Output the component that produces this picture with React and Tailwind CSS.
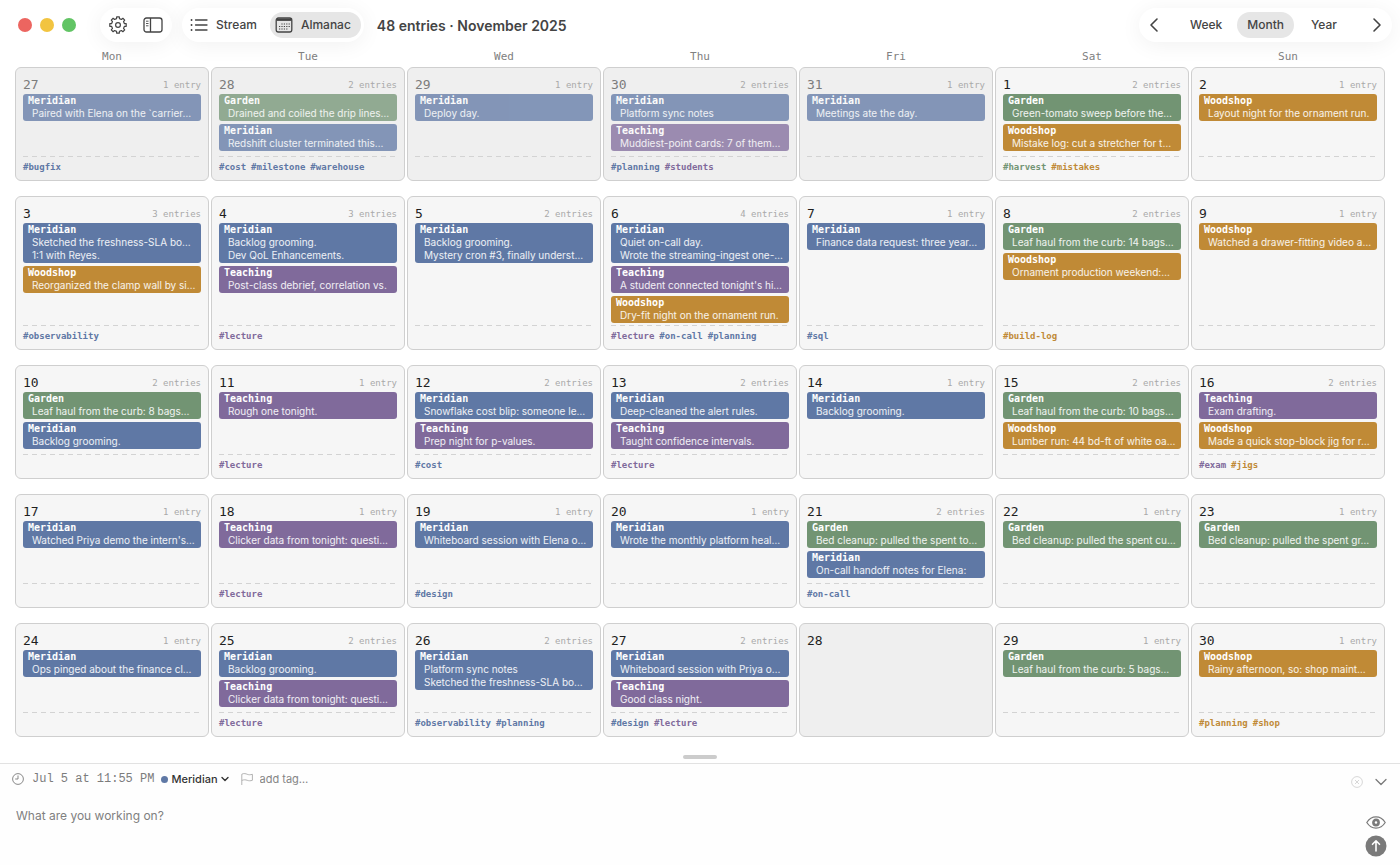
import React from 'react';

const MONO = "font-['DejaVu_Sans_Mono','Liberation_Mono',monospace]";
const LIGHT_MONO = "font-['Liberation_Mono','DejaVu_Sans_Mono',monospace]";
const TONES = {
  Meridian: { chip: 'bg-[#5f78a5]', tag: 'text-[#5f78a5]' },
  Garden: { chip: 'bg-[#729473]', tag: 'text-[#729473]' },
  Teaching: { chip: 'bg-[#806a9b]', tag: 'text-[#806a9b]' },
  Woodshop: { chip: 'bg-[#c08a36]', tag: 'text-[#c08a36]' },
};
const M = (...lines) => ['Meridian', lines];
const G = (...lines) => ['Garden', lines];
const T = (...lines) => ['Teaching', lines];
const W = (...lines) => ['Woodshop', lines];
const m = (label) => ['Meridian', label];
const g = (label) => ['Garden', label];
const t = (label) => ['Teaching', label];
const w = (label) => ['Woodshop', label];

const WEEKS = [
  [
    { d: 27, n: 1, out: true, c: [M('Paired with Elena on the `carrier…')], tags: [m('bugfix')] },
    { d: 28, n: 2, out: true, c: [G('Drained and coiled the drip lines…'), M('Redshift cluster terminated this…')], tags: [m('cost'), m('milestone'), m('warehouse')] },
    { d: 29, n: 1, out: true, c: [M('Deploy day.')], tags: [] },
    { d: 30, n: 2, out: true, c: [M('Platform sync notes'), T('Muddiest-point cards: 7 of them…')], tags: [m('planning'), t('students')] },
    { d: 31, n: 1, out: true, c: [M('Meetings ate the day.')], tags: [] },
    { d: 1, n: 2, c: [G('Green-tomato sweep before the…'), W('Mistake log: cut a stretcher for t…')], tags: [g('harvest'), w('mistakes')] },
    { d: 2, n: 1, c: [W('Layout night for the ornament run.')], tags: [] },
  ],
  [
    { d: 3, n: 3, c: [M('Sketched the freshness-SLA bo…', '1:1 with Reyes.'), W('Reorganized the clamp wall by si…')], tags: [m('observability')] },
    { d: 4, n: 3, c: [M('Backlog grooming.', 'Dev QoL Enhancements.'), T('Post-class debrief, correlation vs.')], tags: [t('lecture')] },
    { d: 5, n: 2, c: [M('Backlog grooming.', 'Mystery cron #3, finally underst…')], tags: [] },
    { d: 6, n: 4, c: [M('Quiet on-call day.', 'Wrote the streaming-ingest one-…'), T("A student connected tonight's hi…"), W('Dry-fit night on the ornament run.')], tags: [t('lecture'), m('on-call'), m('planning')] },
    { d: 7, n: 1, c: [M('Finance data request: three year…')], tags: [m('sql')] },
    { d: 8, n: 2, c: [G('Leaf haul from the curb: 14 bags…'), W('Ornament production weekend:…')], tags: [w('build-log')] },
    { d: 9, n: 1, c: [W('Watched a drawer-fitting video a…')], tags: [] },
  ],
  [
    { d: 10, n: 2, c: [G('Leaf haul from the curb: 8 bags…'), M('Backlog grooming.')], tags: [] },
    { d: 11, n: 1, c: [T('Rough one tonight.')], tags: [t('lecture')] },
    { d: 12, n: 2, c: [M('Snowflake cost blip: someone le…'), T('Prep night for p-values.')], tags: [m('cost')] },
    { d: 13, n: 2, c: [M('Deep-cleaned the alert rules.'), T('Taught confidence intervals.')], tags: [t('lecture')] },
    { d: 14, n: 1, c: [M('Backlog grooming.')], tags: [] },
    { d: 15, n: 2, c: [G('Leaf haul from the curb: 10 bags…'), W('Lumber run: 44 bd-ft of white oa…')], tags: [] },
    { d: 16, n: 2, c: [T('Exam drafting.'), W('Made a quick stop-block jig for r…')], tags: [t('exam'), w('jigs')] },
  ],
  [
    { d: 17, n: 1, c: [M("Watched Priya demo the intern's…")], tags: [] },
    { d: 18, n: 1, c: [T('Clicker data from tonight: questi…')], tags: [t('lecture')] },
    { d: 19, n: 1, c: [M('Whiteboard session with Elena o…')], tags: [m('design')] },
    { d: 20, n: 1, c: [M('Wrote the monthly platform heal…')], tags: [] },
    { d: 21, n: 2, c: [G('Bed cleanup: pulled the spent to…'), M('On-call handoff notes for Elena:')], tags: [m('on-call')] },
    { d: 22, n: 1, c: [G('Bed cleanup: pulled the spent cu…')], tags: [] },
    { d: 23, n: 1, c: [G('Bed cleanup: pulled the spent gr…')], tags: [] },
  ],
  [
    { d: 24, n: 1, c: [M('Ops pinged about the finance cl…')], tags: [] },
    { d: 25, n: 2, c: [M('Backlog grooming.'), T('Clicker data from tonight: questi…')], tags: [t('lecture')] },
    { d: 26, n: 2, c: [M('Platform sync notes', 'Sketched the freshness-SLA bo…')], tags: [m('observability'), m('planning')] },
    { d: 27, n: 2, c: [M('Whiteboard session with Priya o…'), T('Good class night.')], tags: [m('design'), t('lecture')] },
    { d: 28, n: 0, c: [], tags: [] },
    { d: 29, n: 1, c: [G('Leaf haul from the curb: 5 bags…')], tags: [] },
    { d: 30, n: 1, c: [W('Rainy afternoon, so: shop maint…')], tags: [w('planning'), w('shop')] },
  ],
];

function DayCard({ day }) {
  const empty = day.n === 0;
  return (
    <article
      className={`flex min-h-[114px] min-w-0 flex-col rounded-[6px] border border-[#cfcfcf] px-[7px] ${
        day.out || empty ? 'bg-[#efefef]' : 'bg-[#f6f6f6]'
      }`}
    >
      <header className="flex h-[26px] items-end justify-between">
        <span className={`text-[13px] leading-[18px] ${MONO} ${day.out ? 'text-[#7c7c7c]' : 'text-[#1f1f1f]'}`}>{day.d}</span>
        {!empty && (
          <span className={`text-[9px] leading-[18px] text-[#a9a9a9] ${MONO}`}>
            {day.n} {day.n === 1 ? 'entry' : 'entries'}
          </span>
        )}
      </header>
      <div className={`flex flex-col gap-[3px] pb-[2px] ${day.out ? 'opacity-75' : ''}`}>
        {day.c.map(([name, lines], i) => (
          <section key={i} className={`overflow-hidden rounded-[3px] px-[5px] pb-px text-white ${TONES[name].chip}`}>
            <h3 className={`text-[10px] leading-[13px] font-bold ${MONO}`}>{name}</h3>
            {lines.map((l) => (
              <p key={l} className="overflow-hidden pl-1 text-[10px] leading-[13px] whitespace-nowrap text-white/90">
                {l}
              </p>
            ))}
          </section>
        ))}
      </div>
      {!empty && (
        <footer className="mt-auto h-[24px]">
          <svg className="block h-px w-full" aria-hidden="true">
            <line x1="0" y1="0.5" x2="100%" y2="0.5" stroke="#d3d3d3" strokeDasharray="5 4" />
          </svg>
          <p className={`flex gap-[5px] text-[9px] leading-[21px] font-bold ${MONO}`}>
            {day.tags.map(([tone, label]) => (
              <span key={label} className={TONES[tone].tag}>#{label}</span>
            ))}
          </p>
        </footer>
      )}
    </article>
  );
}

const GEAR_POINTS = Array.from({ length: 8 }, (_, i) => i * 45)
  .flatMap((a) => [[a - 13, 6.5], [a - 9, 8.3], [a + 9, 8.3], [a + 13, 6.5]])
  .map(([a, r]) => {
    const rad = (a * Math.PI) / 180;
    return `${(9 + r * Math.cos(rad)).toFixed(2)},${(9 + r * Math.sin(rad)).toFixed(2)}`;
  })
  .join(' ');

function Gear() {
  return (
    <svg viewBox="0 0 18 18" className="size-[18px]" fill="none" stroke="currentColor" strokeWidth="1.2" strokeLinejoin="round">
      <polygon points={GEAR_POINTS} />
      <circle cx="9" cy="9" r="2.4" />
    </svg>
  );
}

export default function App() {
  return (
    <div className="flex min-h-screen flex-col bg-white font-['Inter','Liberation_Sans',sans-serif] text-[#444444]">
      <header className="flex h-[50px] items-center pr-2 pl-[18px]">
        <div className="flex gap-2">
          <span className="size-[14px] rounded-full bg-[#ec6560]" />
          <span className="size-[14px] rounded-full bg-[#f2c440]" />
          <span className="size-[14px] rounded-full bg-[#61c464]" />
        </div>
        <div className="ml-6 flex h-[34px] items-center gap-4 rounded-full bg-white px-[9px] shadow-[0_3px_22px_rgba(0,0,0,0.06)]">
          <button aria-label="Settings"><Gear /></button>
          <button aria-label="Toggle sidebar">
            <svg viewBox="0 0 20 16" className="h-4 w-5" fill="none" stroke="currentColor" strokeWidth="1.3">
              <rect x="1" y="1" width="18" height="14" rx="2.5" />
              <path d="M7.5 1v14" />
              <path d="M3 4.2h2.5M3 6.5h2.5M3 8.8h2.5" strokeWidth="0.9" />
            </svg>
          </button>
        </div>
        <nav className="ml-[10px] flex h-[34px] items-center rounded-full bg-white pr-[3px] pl-2 text-[12px] font-medium shadow-[0_3px_22px_rgba(0,0,0,0.06)]">
          <button className="flex items-center gap-2 pr-[13px]">
            <svg viewBox="0 0 18 14" className="h-[14px] w-[18px]" fill="none" stroke="currentColor" strokeWidth="1.3" strokeLinecap="round">
              <path d="M5.5 2H17M5.5 7H17M5.5 12H17" />
              <path d="M1.5 2h.1M1.5 7h.1M1.5 12h.1" strokeWidth="1.8" />
            </svg>
            Stream
          </button>
          <button className="flex h-[26px] items-center gap-2 rounded-full bg-[#e6e6e6] pr-[10px] pl-[5px]">
            <svg viewBox="0 0 18 16" className="h-4 w-[18px]" fill="none" stroke="currentColor" strokeWidth="1.3">
              <rect x="1.2" y="1" width="15.6" height="14" rx="2.2" />
              <path d="M1.5 2.7h15" strokeWidth="2.4" />
              <path d="M6.4 7h8.4M4 9.5h10.8M4 12h8.4" strokeWidth="1.2" strokeDasharray="1.2 1.2" />
            </svg>
            Almanac
          </button>
        </nav>
        <h1 className="ml-[13px] text-[14px] font-semibold">48 entries · November 2025</h1>
        <nav className="ml-auto flex h-[34px] items-center rounded-full bg-white px-[10px] text-[12px] font-medium shadow-[0_3px_22px_rgba(0,0,0,0.06)]">
          <button aria-label="Previous">
            <svg viewBox="0 0 10 16" className="h-4 w-[10px]" fill="none" stroke="currentColor" strokeWidth="1.6" strokeLinecap="round" strokeLinejoin="round"><path d="M8 2 2 8l6 6" /></svg>
          </button>
          <button className="ml-[21px] h-[26px] px-[10px]">Week</button>
          <button className="ml-[5px] h-[26px] rounded-full bg-[#e6e6e6] px-[10px]">Month</button>
          <button className="ml-[7px] h-[26px] px-[10px]">Year</button>
          <button className="ml-[25px]" aria-label="Next">
            <svg viewBox="0 0 10 16" className="h-4 w-[10px]" fill="none" stroke="currentColor" strokeWidth="1.6" strokeLinecap="round" strokeLinejoin="round"><path d="m2 2 6 6-6 6" /></svg>
          </button>
        </nav>
      </header>

      <main className="px-[15px]">
        <div className={`grid h-[17px] grid-cols-7 gap-[2px] text-center text-[11px] leading-[14px] text-[#808080] ${MONO}`}>
          {['Mon', 'Tue', 'Wed', 'Thu', 'Fri', 'Sat', 'Sun'].map((d) => <span key={d}>{d}</span>)}
        </div>
        <div className="flex flex-col gap-[15px]">
          {WEEKS.map((week, i) => (
            <div key={i} className="grid grid-cols-7 gap-[2px]">
              {week.map((day) => <DayCard key={day.d} day={day} />)}
            </div>
          ))}
        </div>
      </main>

      <div className="flex justify-center pt-[18px] pb-1">
        <span className="h-[4px] w-[34px] rounded-full bg-[#cccccc]" />
      </div>

      <form className="flex flex-1 justify-between border-t border-[#e2e2e2] bg-[#fefefe] pr-[13px] pl-3" onSubmit={(e) => e.preventDefault()}>
        <div className="flex flex-1 flex-col">
          <div className="flex h-[30px] items-center text-[11px] text-[#7c7c7c]">
            <svg viewBox="0 0 12 12" className="size-3" fill="none" stroke="currentColor" strokeWidth="0.9"><circle cx="6" cy="6" r="5.4" /><path d="M6 2.5V6H3.2" /></svg>
            <time className={`ml-[8px] text-[12px] ${LIGHT_MONO}`}>Jul 5 at 11:55 PM</time>
            <button type="button" className="ml-[7px] flex items-center text-[11px] font-medium text-[#333333]">
              <span className="mr-[3px] size-[7px] rounded-full bg-[#5f78a5]" />
              Meridian
              <svg viewBox="0 0 8 6" className="ml-[3px] h-[6px] w-2" fill="none" stroke="currentColor" strokeWidth="1.4" strokeLinecap="round" strokeLinejoin="round"><path d="m1 1.5 3 3 3-3" /></svg>
            </button>
            <svg viewBox="0 0 12 12" className="ml-3 size-3" fill="none" stroke="#aaaaaa" strokeWidth="0.9"><path d="M.8 12V1.2C3 0 5 .8 6.2 1.3c1.6.6 3 .6 5.2 0v6c-2 .7-3.6.6-5.2 0C4.6 6.7 3 6.6.8 7.4" /></svg>
            <input aria-label="Add tag" placeholder="add tag…" className="ml-[7px] w-[120px] bg-transparent outline-none placeholder:text-[#858585]" />
          </div>
          <textarea aria-label="Entry" placeholder="What are you working on?" className="mt-[13px] ml-[4px] flex-1 resize-none bg-transparent text-[12px] leading-[18px] outline-none placeholder:text-[#808080]" />
        </div>
        <div className="flex flex-col items-end text-[#7a7a7a]">
          <div className="flex h-[36px] items-center gap-3">
            <button type="button" aria-label="Clear">
              <svg viewBox="0 0 12 12" className="block size-3" fill="none" stroke="#d2d2d2" strokeWidth="0.9"><circle cx="6" cy="6" r="5.4" /><path d="m4 4 4 4M8 4 4 8" /></svg>
            </button>
            <button type="button" aria-label="Collapse">
              <svg viewBox="0 0 12 8" className="block h-2 w-3" fill="none" stroke="currentColor" strokeWidth="1.3" strokeLinecap="round" strokeLinejoin="round"><path d="m1 1.5 5 5 5-5" /></svg>
            </button>
          </div>
          <div className="mt-[16px] flex flex-col items-center gap-[6px]">
            <button type="button" aria-label="Preview">
              <svg viewBox="0 0 20 13" className="block h-[13px] w-5" fill="none" stroke="currentColor" strokeWidth="1.2"><path d="M.8 6.500C3 3 6.200.9 10 .9s7 2.100 9.200 5.600C17 10 13.800 12.100 10 12.100S3 10 .8 6.500Z" /><circle cx="10" cy="6.5" r="2.6" strokeWidth="2.6" /></svg>
            </button>
            <button type="submit" aria-label="Submit">
              <svg viewBox="0 0 22 22" className="block size-[22px]"><circle cx="11" cy="11" r="10.5" fill="currentColor" /><path d="M11 16V6M7.5 9.300 11 5.800l3.500 3.500" fill="none" stroke="#ffffff" strokeWidth="1.6" strokeLinecap="round" strokeLinejoin="round" /></svg>
            </button>
          </div>
        </div>
      </form>
    </div>
  );
}
